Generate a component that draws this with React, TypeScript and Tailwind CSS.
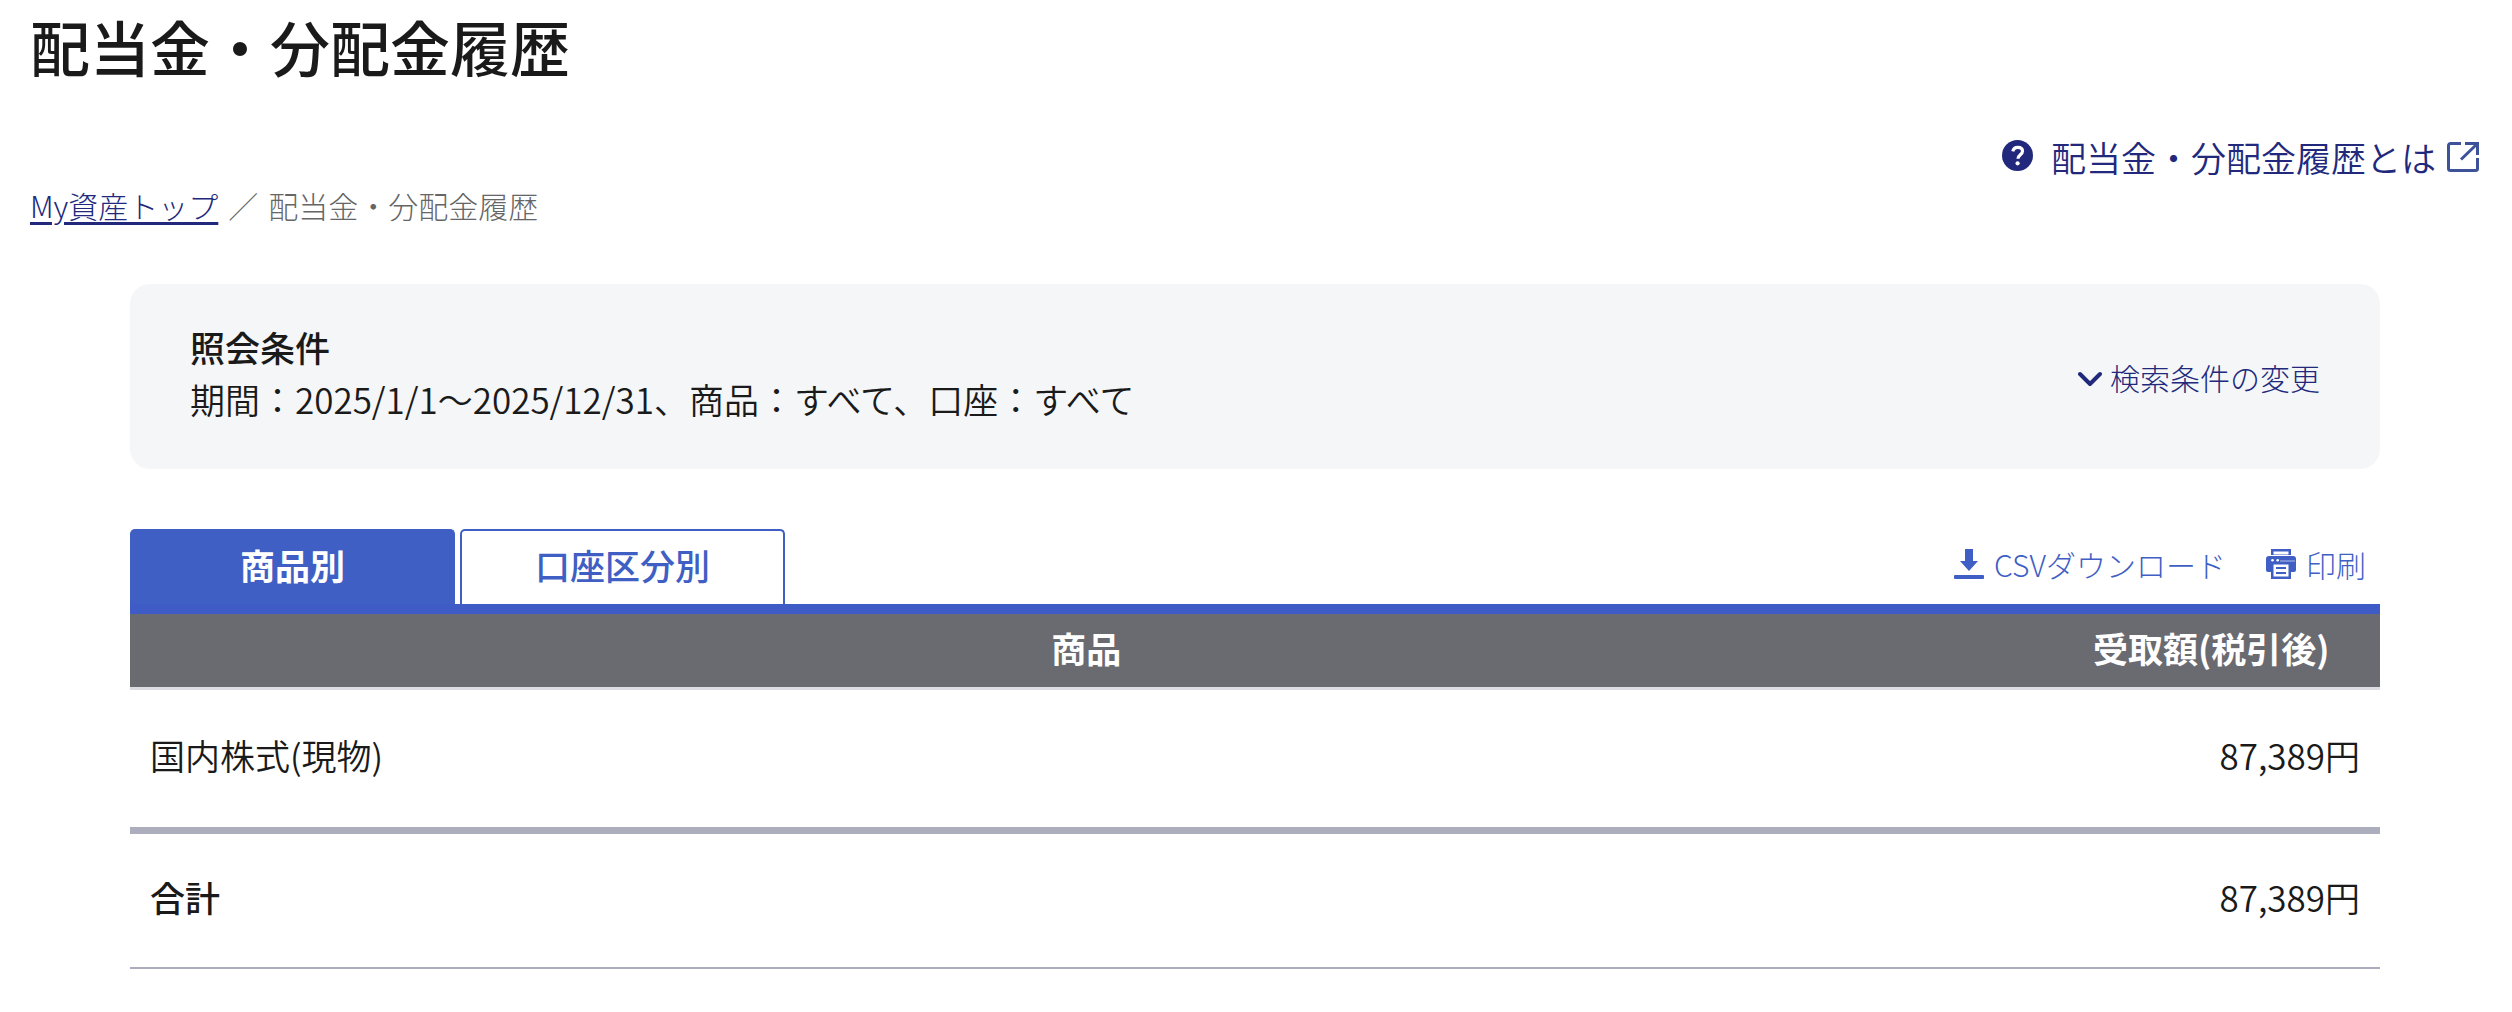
import { useState } from "react"

const tabs = [
  { id: "product", label: "商品別" },
  { id: "account", label: "口座区分別" },
]

const rows = [{ name: "国内株式(現物)", amount: "87,389円" }]

export default function App() {
  const [active, setActive] = useState("product")

  return (
    <main className="min-h-screen bg-white pt-px pr-8 pb-10 pl-[30px] font-['Noto_Sans_CJK_JP',sans-serif] text-[35px] leading-[52px] font-[350] text-[#1a1a1a]">
      <h1 className="text-[60px] leading-[90px] font-medium">配当金・分配金履歴</h1>

      <div className="mt-10 flex justify-end">
        <a href="#help" className="flex items-center text-[#22297c]">
          <HelpIcon />
          <span className="ml-[18px]">配当金・分配金履歴とは</span>
          <ExternalIcon />
        </a>
      </div>

      <nav className="flex gap-[10px] text-[30px] leading-[45px] font-light text-[#666]">
        <a href="#top" className="text-[#22297c] underline decoration-[3px] underline-offset-4">
          My資産トップ
        </a>
        <span>／</span>
        <span>配当金・分配金履歴</span>
      </nav>

      <div className="mx-[100px] mt-14">
        <section className="flex items-center justify-between rounded-[20px] bg-[#f4f6f8] px-[60px] py-[37px]">
          <div className="pb-[7px]">
            <h2 className="font-medium">照会条件</h2>
            <p>期間：2025/1/1～2025/12/31、商品：すべて、口座：すべて</p>
          </div>
          <button type="button" className="flex items-center gap-2 text-[30px] font-light text-[#22297c]">
            <ChevronIcon />
            検索条件の変更
          </button>
        </section>

        <div className="mt-[60px] flex items-end justify-between border-b-10 border-[#3f5cc6]">
          <div className="flex gap-[5px]" role="tablist">
            {tabs.map((tab) => (
              <button
                key={tab.id}
                type="button"
                role="tab"
                aria-selected={active === tab.id}
                onClick={() => setActive(tab.id)}
                className={
                  active === tab.id
                    ? "h-[75px] w-[325px] rounded-t-[5px] border-2 border-b-0 border-[#3f5fc4] bg-[#3f5fc4] pb-1.5 font-bold text-white"
                    : "h-[75px] w-[325px] rounded-t-[5px] border-2 border-b-0 border-[#3f5fc4] bg-white pb-1.5 font-medium text-[#3f5fc4]"
                }
              >
                {tab.label}
              </button>
            ))}
          </div>
          <div className="flex gap-10 self-center pr-[14px] pb-1.5 text-[30px] font-light text-[#3f5fc4]">
            <button type="button" className="flex items-center gap-[10px]">
              <DownloadIcon />
              CSVダウンロード
            </button>
            <button type="button" className="flex items-center gap-[10px]">
              <PrintIcon />
              印刷
            </button>
          </div>
        </div>

        <table className="w-full table-fixed border-collapse">
          <thead>
            <tr className="h-[74px] border-b-3 border-[#dcdce2] bg-[#6a6a71] text-white">
              <th className="w-[85%] pb-1 font-bold">商品</th>
              <th className="pb-1 font-bold">受取額(税引後)</th>
            </tr>
          </thead>
          <tbody>
            {rows.map((row) => (
              <tr key={row.name} className="h-[142px]">
                <td className="px-5 pb-1.5">{row.name}</td>
                <td className="px-5 pb-1.5 text-right">{row.amount}</td>
              </tr>
            ))}
          </tbody>
          <tfoot>
            <tr className="h-[138px] border-t-7 border-b-2 border-[#acaebd]">
              <th className="px-5 pb-1.5 text-left font-medium">合計</th>
              <td className="px-5 pb-1.5 text-right">87,389円</td>
            </tr>
          </tfoot>
        </table>
      </div>
    </main>
  )
}

function HelpIcon() {
  return (
    <svg width="31" height="31" viewBox="0 0 31 31" fill="none" className="mb-1">
      <circle cx="15.5" cy="15.5" r="15.5" fill="#22297c" />
      <path d="M10.8 11.3C11.4 8.7 13.2 7.4 15.8 7.4c2.8 0 4.7 1.5 4.7 3.9 0 3.4-4.5 3.6-4.5 7.4" stroke="#fff" strokeWidth="3.2" />
      <circle cx="15.6" cy="23.3" r="2.1" fill="#fff" />
    </svg>
  )
}

function ExternalIcon() {
  return (
    <svg width="34" height="32" viewBox="0 0 34 32" fill="none" stroke="#3d5299" strokeWidth="3" className="ml-[10px]">
      <path d="M15 2.5H4.5a2 2 0 0 0-2 2v23a2 2 0 0 0 2 2h25a2 2 0 0 0 2-2V17" />
      <path d="M19 2.5h12.5V14M31 3 15 18.5" />
    </svg>
  )
}

function ChevronIcon() {
  return (
    <svg width="24" height="16" viewBox="0 0 24 16" fill="none" stroke="#22297c" strokeWidth="4" strokeLinecap="round" strokeLinejoin="round" className="mt-1">
      <path d="m2 3 10 10L22 3" />
    </svg>
  )
}

function DownloadIcon() {
  return (
    <svg width="30" height="30" viewBox="0 0 30 30" fill="#3f5fc4">
      <path d="M11 0h8v12h5l-9 10-9-10h5z" />
      <rect y="26" width="30" height="4" rx="1" />
    </svg>
  )
}

function PrintIcon() {
  return (
    <svg width="30" height="30" viewBox="0 0 30 30" fill="#3f5fc4">
      <path d="M5 0h20v6H5z" />
      <path d="M7.5 2.5h15v3h-15z" fill="#fff" />
      <path d="M3 7h24a3 3 0 0 1 3 3v11a2 2 0 0 1-2 2H2a2 2 0 0 1-2-2V10a3 3 0 0 1 3-3z" />
      <path d="M5 14h20v16H5z" />
      <path d="M7.5 15.5h15v12h-15z" fill="#fff" />
      <path d="M10 18h10v2H10zM10 23h10v2H10z" />
      <circle cx="6.5" cy="11.3" r="1.3" fill="#fff" />
      <circle cx="11.7" cy="11.3" r="1.3" fill="#fff" />
      <path d="M14 12h15" stroke="#b4c0e8" />
    </svg>
  )
}
